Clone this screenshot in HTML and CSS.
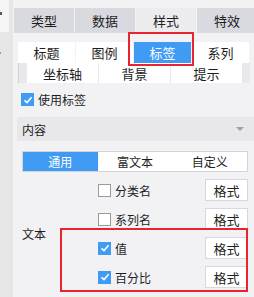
FILE: index.html
```html
<!DOCTYPE html>
<html lang="zh">
<head>
<meta charset="utf-8">
<link rel="stylesheet" href="styles.css">
</head>
<body>
<div class="side">
  <div class="side-top"><span class="side-mark"></span></div>
  <span class="side-dot"></span>
</div>
<div class="main">
  <div class="tabs">
    <div class="tab">类型</div>
    <div class="tab">数据</div>
    <div class="tab active">样式</div>
    <div class="tab">特效</div>
  </div>
  <div class="subtabs">
    <div class="subrow">
      <div class="sub">标题</div>
      <div class="sub">图例</div>
      <div class="sub on">标签</div>
      <div class="sub">系列</div>
    </div>
    <div class="subrow row2">
      <div class="sub wide">坐标轴</div>
      <div class="sub wide">背景</div>
      <div class="sub wide">提示</div>
    </div>
  </div>
  <label class="use">
    <span class="cb checked"><svg viewBox="0 0 12 12" width="12" height="12"><path d="M2.5 6.3 L5 8.6 L9.6 3.2" fill="none" stroke="#fff" stroke-width="1.6"/></svg></span>
    <span>使用标签</span>
  </label>
  <div class="section">
    <span>内容</span>
    <span class="tri"></span>
  </div>
  <div class="seg">
    <div class="segi on">通用</div>
    <div class="segi">富文本</div>
    <div class="segi">自定义</div>
  </div>
  <div class="fields">
    <div class="flabel">文本</div>
    <div class="frows">
      <div class="frow">
        <span class="cb"></span><span class="ftext">分类名</span>
        <button class="fmt">格式</button>
      </div>
      <div class="frow">
        <span class="cb"></span><span class="ftext">系列名</span>
        <button class="fmt">格式</button>
      </div>
      <div class="frow">
        <span class="cb checked"><svg viewBox="0 0 12 12" width="12" height="12"><path d="M2.5 6.3 L5 8.6 L9.6 3.2" fill="none" stroke="#fff" stroke-width="1.6"/></svg></span><span class="ftext">值</span>
        <button class="fmt">格式</button>
      </div>
      <div class="frow">
        <span class="cb checked"><svg viewBox="0 0 12 12" width="12" height="12"><path d="M2.5 6.3 L5 8.6 L9.6 3.2" fill="none" stroke="#fff" stroke-width="1.6"/></svg></span><span class="ftext">百分比</span>
        <button class="fmt">格式</button>
      </div>
    </div>
  </div>
  <div class="hl hl1"></div>
  <div class="hl hl2"></div>
</div>
</body>
</html>
```

FILE: styles.css
```css
* { box-sizing: border-box; }
html, body { margin: 0; padding: 0; }
body {
  width: 254px;
  height: 297px;
  overflow: hidden;
  display: flex;
  font-family: "Noto Sans CJK SC", "Noto Sans", sans-serif;
  font-size: 12px;
  color: #1e1e1e;
  background: #f2f2f5;
}
.side {
  width: 13px;
  flex-shrink: 0;
  background: #e6e6e6;
  position: relative;
}
.side-top {
  width: 9px;
  height: 32px;
  background: #f5f5f5;
  position: relative;
}
.side-mark {
  position: absolute;
  left: 0;
  top: 12px;
  width: 2px;
  height: 3px;
  background: #555;
}
.side-dot {
  position: absolute;
  left: 0;
  top: 52px;
  width: 1px;
  height: 2px;
  background: #999;
}
.main {
  flex: 1;
  position: relative;
  overflow: hidden;
  background: #f2f2f5;
}
.tabs {
  display: flex;
  gap: 1px;
  margin-top: 8px;
  margin-left: 1px;
  height: 25px;
}
.tab {
  width: 60px;
  flex-shrink: 0;
  background: #d9dadf;
  display: flex;
  align-items: center;
  justify-content: center;
  font-size: 13px;
}
.tab.active { background: #ececef; }
.subtabs {
  margin-top: 9px;
  margin-left: 5px;
  width: 232px;
}
.subrow {
  display: flex;
  gap: 1px;
  height: 21px;
}
.row2 {
  height: 20px;
  justify-content: center;
  border-left: 1px solid #d0d0d4;
  background: #e9e9ec;
}
.sub {
  width: 57px;
  background: #fff;
  display: flex;
  align-items: center;
  justify-content: center;
  font-size: 13px;
}
.sub.on { background: #409bf5; color: #fff; }
.sub.wide { width: 71px; }
.use {
  display: flex;
  align-items: center;
  gap: 4px;
  margin-top: 10px;
  margin-left: 8px;
  height: 13px;
  font-size: 12px;
}
.cb {
  width: 13px;
  height: 13px;
  border: 1px solid #9a9a9a;
  background: #fff;
  display: inline-flex;
  flex-shrink: 0;
}
.cb.checked {
  border: none;
  background: #409bf5;
  align-items: center;
  justify-content: center;
}
.section {
  margin-top: 11px;
  margin-left: 4px;
  height: 24px;
  background: #e8e8eb;
  display: flex;
  align-items: center;
  justify-content: space-between;
  padding: 0 10px 0 5px;
  font-size: 12px;
}
.tri {
  width: 0;
  height: 0;
  border-left: 4px solid transparent;
  border-right: 4px solid transparent;
  border-top: 4px solid #a0a0a4;
}
.seg {
  margin-top: 10px;
  margin-left: 9px;
  width: 226px;
  height: 21px;
  border: 1px solid #d4d4d8;
  background: #fff;
  display: flex;
}
.segi {
  flex: 1;
  display: flex;
  align-items: center;
  justify-content: center;
  font-size: 12px;
}
.segi.on { background: #409bf5; color: #fff; }
.fields {
  margin-top: 7px;
  margin-left: 9px;
  display: flex;
  align-items: center;
}
.flabel {
  width: 76px;
  font-size: 12px;
}
.frows {
  display: flex;
  flex-direction: column;
  gap: 7px;
  width: 150px;
}
.frow {
  display: flex;
  align-items: center;
  height: 22px;
}
.ftext {
  margin-left: 4px;
  font-size: 12px;
  flex: 1;
}
.fmt {
  width: 43px;
  height: 22px;
  margin: 0;
  padding: 0;
  background: #fff;
  border: 1px solid #d8d8dc;
  border-radius: 0;
  font-family: inherit;
  font-size: 13px;
  color: #1e1e1e;
}
.hl {
  position: absolute;
  border: 2px solid #e8242e;
  pointer-events: none;
}
.hl1 { left: 115px; top: 32px; width: 66px; height: 34px; }
.hl2 { left: 47px; top: 228px; width: 188px; height: 64px; }
```
